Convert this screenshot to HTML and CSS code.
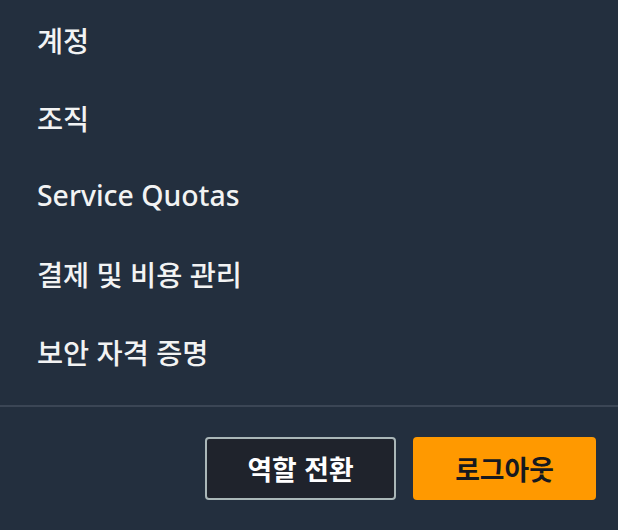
FILE: index.html
```
<!DOCTYPE html>
<html lang="ko">
<head>
<meta charset="utf-8">
<link rel="stylesheet" href="styles.css">
</head>
<body>
<div class="panel">
  <ul class="menu">
    <li class="item">계정</li>
    <li class="item">조직</li>
    <li class="item">Service Quotas</li>
    <li class="item">결제 및 비용 관리</li>
    <li class="item">보안 자격 증명</li>
  </ul>
  <div class="divider"></div>
  <div class="actions">
    <button class="btn btn-outline">역할 전환</button>
    <button class="btn btn-primary">로그아웃</button>
  </div>
</div>
</body>
</html>
```

FILE: styles.css
```
html, body {
  margin: 0;
  padding: 0;
  background: #232f3e;
}
body {
  width: 618px;
  height: 530px;
  overflow: hidden;
  font-family: "Noto Sans", "Noto Sans CJK KR", sans-serif;
}
.panel {
  display: flex;
  flex-direction: column;
}
.menu {
  list-style: none;
  margin: 0;
  padding: 0;
}
.item {
  height: 78px;
  display: flex;
  align-items: center;
  padding-left: 37px;
  color: #f2f3f3;
  font-size: 28.4px;
  font-weight: 500;
}
.divider {
  margin-top: 15px;
  height: 2px;
  background: #3b4655;
}
.actions {
  display: flex;
  justify-content: flex-end;
  gap: 17px;
  padding: 30px 22px 0 0;
}
.btn {
  height: 63px;
  border-radius: 4px;
  font-family: "Noto Sans CJK KR", sans-serif;
  font-size: 26.8px;
  font-weight: 700;
  cursor: pointer;
}
.btn-outline {
  width: 191px;
  background: #1f232c;
  border: 2px solid #aab7b8;
  color: #ffffff;
}
.btn-primary {
  width: 183px;
  background: #ff9900;
  border: none;
  color: #16191f;
}
```
